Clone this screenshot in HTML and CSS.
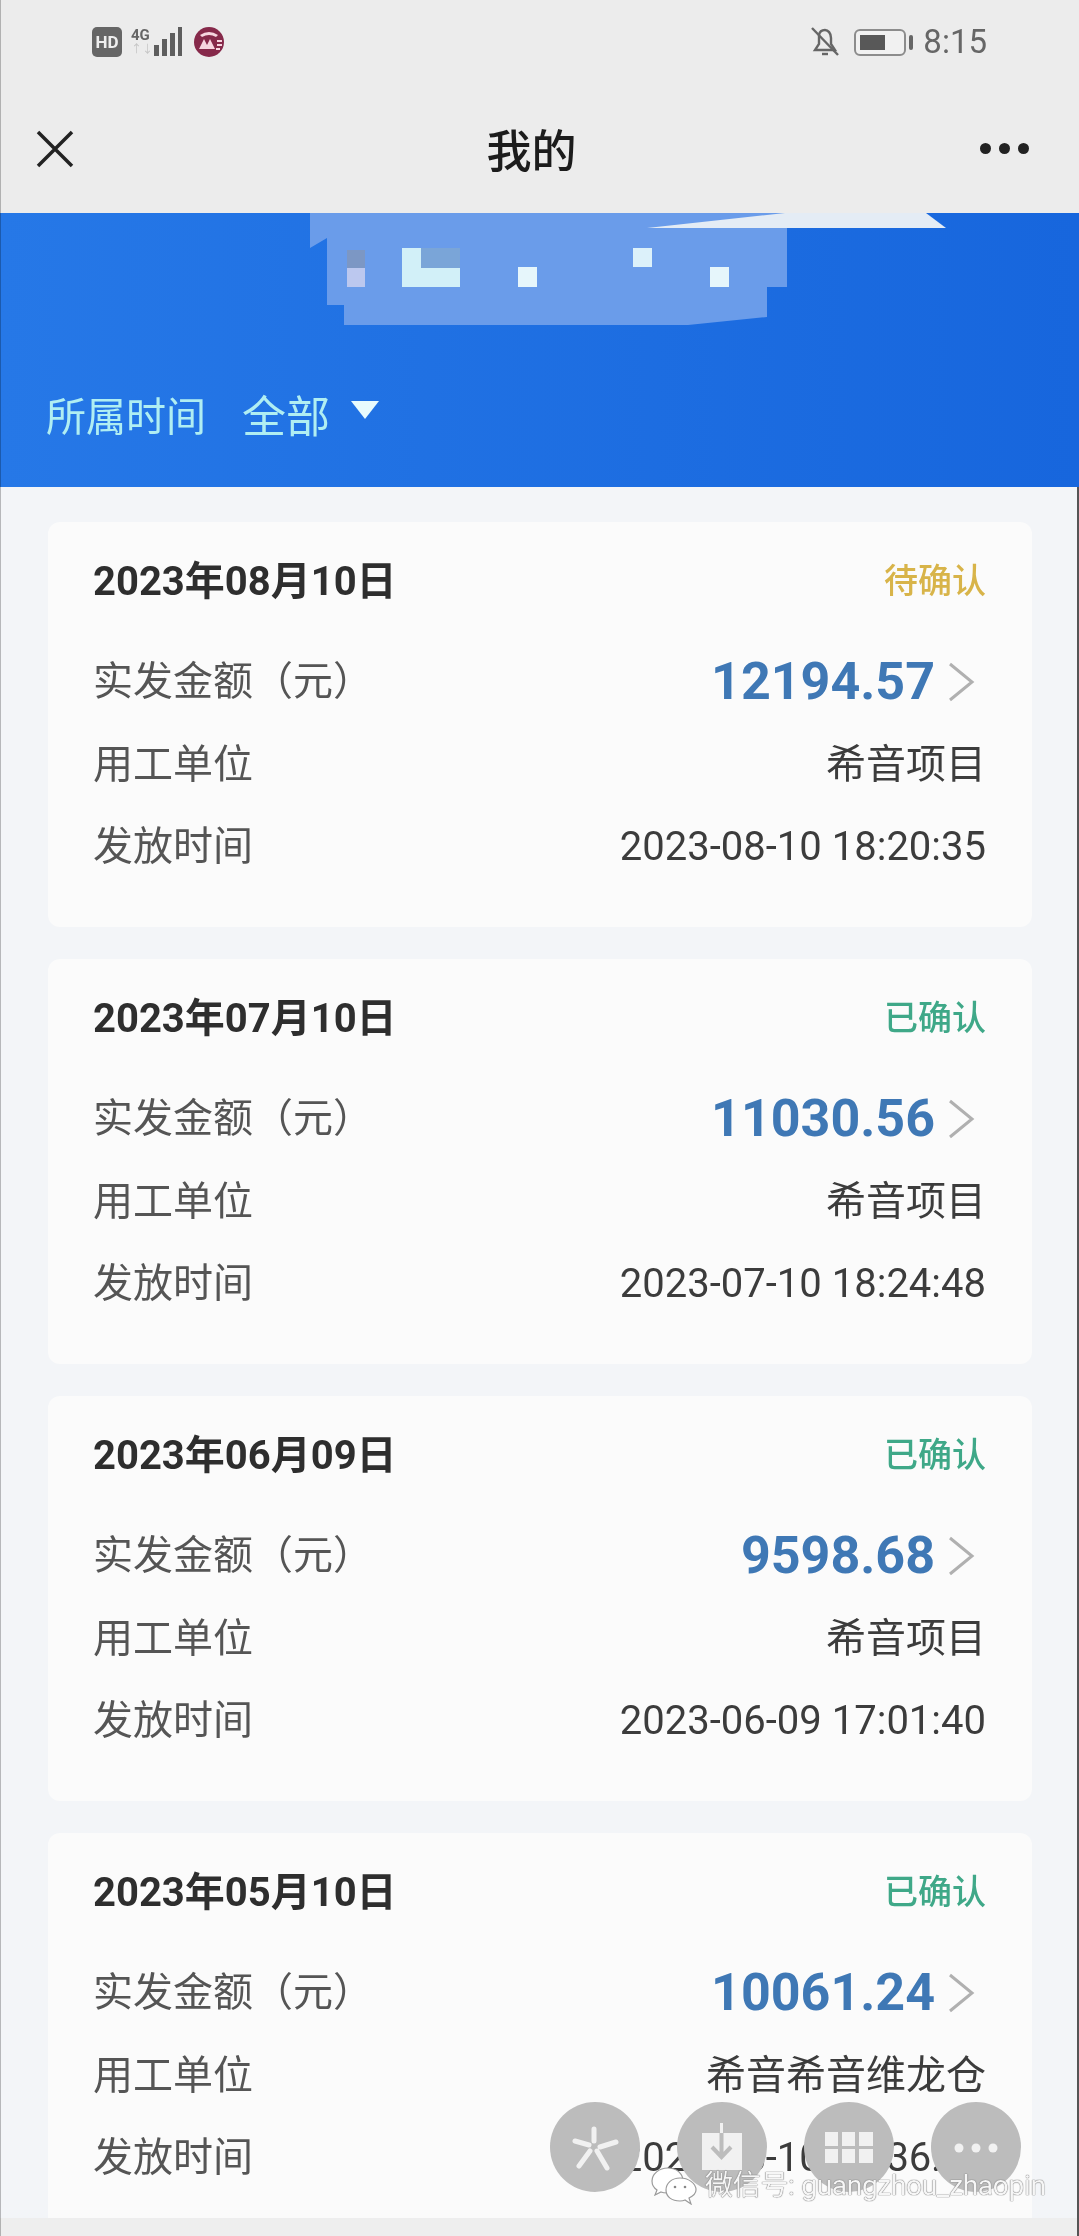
FILE: index.html
```html
<!DOCTYPE html>
<html lang="zh-CN">
<head>
    <meta charset="UTF-8">
    <meta name="viewport" content="width=device-width, initial-scale=1.0">
    <title>我的</title>
    <link rel="stylesheet" href="styles.css">
</head>
<body>

<div class="page">
    <div class="status-bar">
        <div class="status-left">
            <span class="hd">HD</span>
            <div class="network">
                <span class="net-4g">4G</span>
                <span class="net-arrows">↑↓</span>
            </div>
            <svg class="signal" width="30" height="32" viewBox="0 0 30 32">
                <rect x="1" y="19" width="5" height="11" fill="#5e5e5e"/>
                <rect x="9" y="13" width="5" height="17" fill="#5e5e5e"/>
                <rect x="17" y="7" width="5" height="23" fill="#5e5e5e"/>
                <rect x="25" y="1" width="4" height="29" fill="#5e5e5e"/>
            </svg>
            <svg class="bank" width="32" height="32" viewBox="0 0 32 32">
                <circle cx="16" cy="16" r="15" fill="#86294a"/>
                <path d="M6 23 L11 13 L14 19 L17 13 L22 23 Z" fill="#f6d5df"/>
                <path d="M7 9 Q16 3 25 9 L23 11 Q16 7 9 11 Z" fill="#f6d5df"/>
                <path d="M24 15 H29 M24 19 H29 M23 23 H27" stroke="#f6d5df" stroke-width="2"/>
            </svg>
        </div>
        <div class="status-right">
            <svg width="30" height="32" viewBox="0 0 30 32" fill="none" stroke="#666" stroke-width="2.400">
                <path d="M5 24 H25 L21 18 V12 C21 7 18 4 15 4 C12 4 9.500 6 9 9 V18 Z"/>
                <path d="M2 2 L28 29"/>
                <path d="M12 28 H18"/>
            </svg>
            <div class="battery">
                <div class="battery-body"><div class="battery-fill"></div></div>
                <div class="battery-cap"></div>
            </div>
            <span class="clock">8:15</span>
        </div>
    </div>

    <div class="nav-bar">
        <svg width="38" height="38" viewBox="0 0 38 38" fill="none" stroke="#222" stroke-width="3.500">
            <path d="M2 2 L36 36 M36 2 L2 36"/>
        </svg>
        <div class="nav-title">我的</div>
        <div class="nav-more"><i></i><i></i><i></i></div>
    </div>

    <div class="hero">
        <svg class="mosaic" width="1079" height="120" viewBox="0 0 1079 120">
            <path d="M310 0 H787 V74 H767 V104 L688 112 H344 V92 H327 V25 L310 35 Z" fill="#6a9cea"/>
            <path d="M647 15 L785 0 H926 L946 15 Z" fill="#e4ecf5"/>
            <rect x="347" y="37" width="18" height="18" fill="#7c97c4"/>
            <rect x="347" y="55" width="18" height="19" fill="#bcc8ef"/>
            <path d="M402 35 H421 V55 H460 V74 H402 Z" fill="#d2f0f8"/>
            <rect x="421" y="35" width="39" height="20" fill="#7aa5d8"/>
            <rect x="518" y="54" width="19" height="20" fill="#e6f6fb"/>
            <rect x="633" y="35" width="19" height="19" fill="#dcf1fa"/>
            <rect x="710" y="54" width="19" height="20" fill="#e6f6fb"/>
        </svg>
        <div class="filter">
            <span class="filter-label">所属时间</span>
            <span class="filter-value">全部</span>
            <span class="filter-arrow"></span>
        </div>
    </div>

    <div class="list">
        <div class="card">
            <div class="card-head">
                <span class="card-date">2023年08月10日</span>
                <span class="badge pending">待确认</span>
            </div>
            <div class="row">
                <span class="label">实发金额（元）</span>
                <span class="amount">12194.57<svg class="chevron" width="28" height="40" viewBox="0 0 28 40" fill="none" stroke="#b0b0b0" stroke-width="3"><path d="M3 2 L25 20 L3 38"/></svg></span>
            </div>
            <div class="row">
                <span class="label">用工单位</span>
                <span class="value">希音项目</span>
            </div>
            <div class="row">
                <span class="label">发放时间</span>
                <span class="value time">2023-08-10 18:20:35</span>
            </div>
        </div>

        <div class="card">
            <div class="card-head">
                <span class="card-date">2023年07月10日</span>
                <span class="badge done">已确认</span>
            </div>
            <div class="row">
                <span class="label">实发金额（元）</span>
                <span class="amount">11030.56<svg class="chevron" width="28" height="40" viewBox="0 0 28 40" fill="none" stroke="#b0b0b0" stroke-width="3"><path d="M3 2 L25 20 L3 38"/></svg></span>
            </div>
            <div class="row">
                <span class="label">用工单位</span>
                <span class="value">希音项目</span>
            </div>
            <div class="row">
                <span class="label">发放时间</span>
                <span class="value time">2023-07-10 18:24:48</span>
            </div>
        </div>

        <div class="card">
            <div class="card-head">
                <span class="card-date">2023年06月09日</span>
                <span class="badge done">已确认</span>
            </div>
            <div class="row">
                <span class="label">实发金额（元）</span>
                <span class="amount">9598.68<svg class="chevron" width="28" height="40" viewBox="0 0 28 40" fill="none" stroke="#b0b0b0" stroke-width="3"><path d="M3 2 L25 20 L3 38"/></svg></span>
            </div>
            <div class="row">
                <span class="label">用工单位</span>
                <span class="value">希音项目</span>
            </div>
            <div class="row">
                <span class="label">发放时间</span>
                <span class="value time">2023-06-09 17:01:40</span>
            </div>
        </div>

        <div class="card">
            <div class="card-head">
                <span class="card-date">2023年05月10日</span>
                <span class="badge done">已确认</span>
            </div>
            <div class="row">
                <span class="label">实发金额（元）</span>
                <span class="amount">10061.24<svg class="chevron" width="28" height="40" viewBox="0 0 28 40" fill="none" stroke="#b0b0b0" stroke-width="3"><path d="M3 2 L25 20 L3 38"/></svg></span>
            </div>
            <div class="row">
                <span class="label">用工单位</span>
                <span class="value">希音希音维龙仓</span>
            </div>
            <div class="row">
                <span class="label">发放时间</span>
                <span class="value time">2023-05-10 18:36:20</span>
            </div>
        </div>
    </div>

    <div class="bottom-strip"></div>

    <!-- floating buttons over the last card -->
    <div class="float-buttons">
        <div class="float-btn">
            <svg width="90" height="90" viewBox="0 0 90 90" fill="none" stroke="#f1f1f1" stroke-width="5" stroke-linecap="round">
                <path d="M44 27 V39 M25 39 L39 43 M50 45 L66 40 M29 64 L40 49 M57 66 L47 49"/>
            </svg>
        </div>
        <div class="float-btn">
            <svg width="90" height="90" viewBox="0 0 90 90">
                <path d="M25 31 H65 V68 H25 Z" fill="#f1f1f1"/>
                <rect x="43" y="21" width="3" height="10" fill="#f1f1f1"/>
                <path d="M44.500 31 V54 M35 45 L44.500 55 L54 45" fill="none" stroke="#bcbcbc" stroke-width="4"/>
            </svg>
        </div>
        <div class="float-btn">
            <svg width="90" height="90" viewBox="0 0 90 90" fill="#f1f1f1">
                <rect x="21" y="30" width="13" height="14"/>
                <rect x="38" y="30" width="13" height="14"/>
                <rect x="55" y="30" width="14" height="14"/>
                <rect x="21" y="47" width="13" height="14"/>
                <rect x="38" y="47" width="13" height="14"/>
                <rect x="55" y="47" width="14" height="14"/>
            </svg>
        </div>
        <div class="float-btn">
            <svg width="90" height="90" viewBox="0 0 90 90" fill="#f1f1f1">
                <circle cx="28" cy="46" r="4.500"/>
                <circle cx="45" cy="46" r="4.500"/>
                <circle cx="62" cy="46" r="4.500"/>
            </svg>
        </div>
    </div>

    <div class="watermark">
        <svg width="46" height="38" viewBox="0 0 46 38" stroke="#9a9a9a" stroke-width="1.200" fill="#fff">
            <path d="M17 1 C8 1 1 7 1 14 C1 18 3 21 6 23 L4 28 L10 25 C12 26 14 26 17 26 C26 26 32 20 32 14 C32 7 26 1 17 1 Z"/>
            <path d="M29 11 C21 11 15 16 15 23 C15 30 21 34 29 34 C31 34 32 34 34 33 L40 37 L38 31 C42 29 45 26 45 23 C45 16 37 11 29 11 Z"/>
            <circle cx="24" cy="20" r="1.300" fill="#888" stroke="none"/>
            <circle cx="34" cy="20" r="1.300" fill="#888" stroke="none"/>
        </svg>
        <span class="watermark-text">微信号: guangzhou_zhaopin</span>
    </div>
</div>

</body>
</html>
```

FILE: styles.css
```css
html, body {
    margin: 0;
    padding: 0;
}
body {
    font-family: Roboto, "Noto Sans CJK SC", sans-serif;
    background-color: #eeeeee;
}
/* the source is a soft phone photo, hence the slight blur */
.page {
    position: relative;
    width: 1079px;
    height: 2236px;
    display: flex;
    flex-direction: column;
    overflow: hidden;
    background-color: #ececec;
    filter: blur(0.5px);
}
.page::before {
    content: "";
    position: absolute;
    left: 0;
    top: 0;
    bottom: 0;
    width: 1px;
    background-color: rgba(0, 0, 0, 0.25);
    z-index: 1;
}
.status-bar {
    height: 84px;
    flex-shrink: 0;
    padding: 0 92px;
    display: flex;
    align-items: center;
    justify-content: space-between;
}
.status-left, .status-right {
    display: flex;
    align-items: center;
}
.hd {
    width: 30px;
    height: 30px;
    border-radius: 5px;
    background-color: #666666;
    color: #eeeeee;
    font-size: 17px;
    font-weight: bold;
    line-height: 30px;
    text-align: center;
}
.network {
    width: 20px;
    margin-left: 9px;
    display: flex;
    flex-direction: column;
}
.net-4g {
    font-size: 15px;
    font-weight: bold;
    line-height: 16px;
    color: #666666;
}
.net-arrows {
    font-size: 11px;
    line-height: 14px;
    color: #c4c4c4;
}
.signal {
    margin-left: 2px;
}
.bank {
    margin-left: 10px;
}
.battery {
    margin-left: 14px;
    display: flex;
    align-items: center;
}
.battery-body {
    width: 52px;
    height: 27px;
    box-sizing: border-box;
    padding: 4px;
    border: 2px solid #8c8c8c;
    border-radius: 6px;
    background-color: #f1f1f1;
}
.battery-fill {
    width: 25px;
    height: 100%;
    background-color: #585858;
}
.battery-cap {
    width: 4px;
    height: 15px;
    margin-left: 3px;
    background-color: #666666;
    border-radius: 2px;
}
.clock {
    margin-left: 10px;
    font-size: 33px;
    color: #666666;
    line-height: 40px;
}
.nav-bar {
    height: 129px;
    flex-shrink: 0;
    box-sizing: border-box;
    padding: 0 50px 0 36px;
    display: flex;
    align-items: center;
    justify-content: space-between;
}
.nav-title {
    font-size: 45px;
    font-weight: 500;
    color: #1c1c1c;
    margin-left: 9px;
    margin-bottom: 1px;
}
.nav-more {
    display: flex;
    gap: 8px;
}
.nav-more i {
    display: block;
    width: 11px;
    height: 11px;
    border-radius: 50%;
    background-color: #222222;
}
.hero {
    position: relative;
    height: 274px;
    flex-shrink: 0;
    box-sizing: border-box;
    padding: 171px 0 0 46px;
    background: linear-gradient(90deg, #2678e7, #1766dd);
}
.mosaic {
    position: absolute;
    left: 0;
    top: 0;
}
.filter {
    position: relative;
    height: 60px;
    display: flex;
    align-items: center;
    color: #b0eef2;
}
.filter-label {
    font-size: 40px;
}
.filter-value {
    font-size: 44px;
    margin-left: 36px;
}
.filter-arrow {
    width: 0;
    height: 0;
    margin-left: 21px;
    margin-top: -8px;
    border-left: 14px solid transparent;
    border-right: 14px solid transparent;
    border-top: 18px solid #e8fbfd;
}
.list {
    flex: 1;
    min-height: 0;
    padding: 35px 45px 0 48px;
    display: flex;
    flex-direction: column;
    gap: 32px;
    overflow: hidden;
    background-color: #f3f5f8;
    border-right: 2px solid #555555;
}
.card {
    height: 405px;
    flex-shrink: 0;
    box-sizing: border-box;
    padding: 30px 46px 0 45px;
    border-radius: 12px;
    background-color: #fbfbfb;
}
.card-head {
    height: 52px;
    margin-bottom: 35px;
    display: flex;
    align-items: center;
    justify-content: space-between;
}
.card-date {
    font-size: 40px;
    font-weight: bold;
    color: #2e2e2e;
}
.badge {
    font-size: 34px;
    font-weight: 500;
}
.pending {
    color: #d8b449;
}
.done {
    color: #3fa888;
}
.row {
    height: 82px;
    display: flex;
    align-items: center;
    justify-content: space-between;
    font-size: 40px;
    line-height: 48px;
}
.card-head + .row {
    height: 85px;
}
.label {
    color: #555555;
}
.value {
    color: #3c3c3c;
}
.time {
    line-height: 40px;
}
.amount {
    display: flex;
    align-items: center;
    font-size: 52px;
    font-weight: bold;
    color: #3f78b5;
}
.chevron {
    margin-left: 12px;
    margin-right: 11px;
}
.bottom-strip {
    height: 18px;
    flex-shrink: 0;
    background-color: #eeeeee;
    border-right: 2px solid #555555;
}
.float-buttons {
    position: absolute;
    left: 550px;
    top: 2102px;
    display: flex;
    gap: 37px;
}
.float-btn {
    width: 90px;
    height: 90px;
    border-radius: 50%;
    background-color: #bcbcbc;
}
.watermark {
    position: absolute;
    left: 651px;
    top: 2167px;
    display: flex;
    align-items: center;
    gap: 8px;
    color: #f6f6f6;
    white-space: nowrap;
}
.watermark-text {
    font-size: 28px;
    line-height: 30px;
    letter-spacing: -0.3px;
    text-shadow: 0 0 1px #555555, 0 0 1px #777777;
}
```
